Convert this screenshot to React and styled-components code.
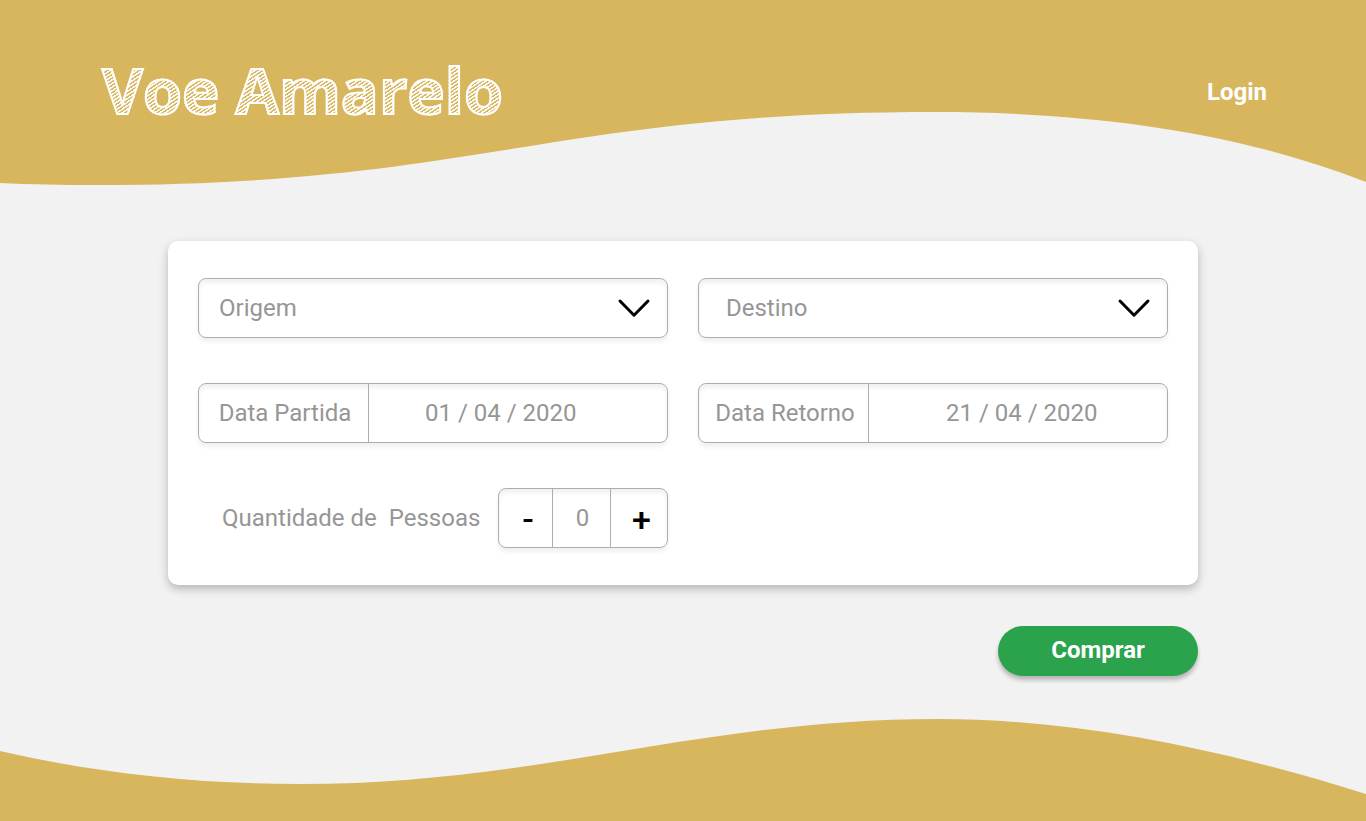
import React, { useState } from 'react';
import styled, { createGlobalStyle } from 'styled-components';

const gold = '#d8b65e';
const line = '#adadad';
const muted = '#969696';

const GlobalStyle = createGlobalStyle`
  *, *::before, *::after { box-sizing: border-box; }
  body { margin: 0; background: #f2f2f2; }
  body, button, input, select {
    font-family: Roboto, "Liberation Sans", sans-serif;
    font-size: 24px;
    line-height: 28px;
  }
`;

const Page = styled.div`
  display: flex;
  flex-direction: column;
  min-height: 100vh;
`;

const Header = styled.header`
  display: grid;
  grid-template-columns: minmax(0, 1fr);
  > * { grid-area: 1 / 1; }
`;

const Wave = styled.svg`
  display: block;
  width: 100%;
  height: ${(p) => p.$height}px;
  fill: ${gold};
`;

const Nav = styled.nav`
  display: flex;
  align-items: center;
  justify-content: space-between;
  align-self: start;
  height: 184px;
  padding: 0 99px 0 102px;
`;

const Brand = styled.h1`
  margin: 0;
  padding-bottom: 4px;
  font-family: "Open Sans", "Noto Sans", sans-serif;
  font-size: 63px;
  font-weight: 700;
  line-height: 88px;
  color: transparent;
  background: repeating-linear-gradient(146deg, #fff 0 1px, ${gold} 2px 3px);
  background-clip: text;
  -webkit-background-clip: text;
  -webkit-text-stroke: 2px #fff;
`;

const LoginLink = styled.a`
  color: #fff;
  font-weight: 700;
  text-decoration: none;
`;

const Form = styled.form`
  display: flex;
  flex-direction: column;
  align-items: flex-end;
  gap: 41px;
  width: calc(100% - 32px);
  max-width: 1030px;
  margin: 56px auto 43px;
`;

const Card = styled.div`
  display: grid;
  grid-template-columns: repeat(auto-fit, minmax(min(400px, 100%), 1fr));
  gap: 45px 30px;
  width: 100%;
  padding: 37px 30px;
  border-radius: 10px;
  background: #fff;
  box-shadow: 0 4px 10px rgba(0, 0, 0, 0.25);
`;

const Field = styled.div`
  display: grid;
  grid-template-columns: ${(p) => p.$columns || 'minmax(0, 1fr)'};
  height: 60px;
  overflow: hidden;
  border: 1px solid ${line};
  border-radius: 8px;
  color: ${muted};
  box-shadow: 0 4px 4px rgba(0, 0, 0, 0.06), inset 0 4px 4px rgba(0, 0, 0, 0.06);
`;

const Select = styled.select`
  grid-area: 1 / 1;
  width: 100%;
  padding: 0 60px 0 ${(p) => p.$indent}px;
  border: 0;
  appearance: none;
  background: transparent;
  color: inherit;
`;

const Chevron = styled.svg`
  grid-area: 1 / 1;
  align-self: center;
  justify-self: end;
  width: 34px;
  height: 20px;
  margin-right: 16px;
  fill: none;
  stroke: #000;
  stroke-width: 3;
  stroke-linecap: round;
  stroke-linejoin: round;
  pointer-events: none;
`;

const DateLabel = styled.label`
  display: flex;
  align-items: center;
  justify-content: center;
  padding-left: 3px;
  border-right: 1px solid ${line};
  white-space: nowrap;
`;

const DateInput = styled.input`
  min-width: 0;
  padding: 0 0 0 ${(p) => p.$indent}px;
  border: 0;
  background: transparent;
  color: inherit;
`;

const People = styled.div`
  display: flex;
  align-items: center;
  justify-content: space-between;
  padding-left: 24px;
  color: ${muted};
`;

const PeopleLabel = styled.label`
  white-space: pre;
`;

const Stepper = styled(Field)`
  width: 170px;
`;

const StepButton = styled.button`
  padding: 2px 0 0 5px;
  border: 0;
  background: transparent;
  color: #000;
  font-size: 34px;
  font-weight: 500;
  cursor: pointer;
`;

const Count = styled.input`
  min-width: 0;
  padding: 0 0 0 2px;
  border: solid ${line};
  border-width: 0 1px;
  background: transparent;
  color: inherit;
  text-align: center;
`;

const BuyButton = styled.button`
  width: 200px;
  height: 50px;
  padding: 0 0 2px;
  border: 0;
  border-radius: 25px;
  background: #2ba24c;
  color: #fff;
  font-weight: 700;
  box-shadow: 0 4px 4px rgba(0, 0, 0, 0.25);
  cursor: pointer;
`;

const Footer = styled.footer`
  margin-top: auto;
`;

function PlaceSelect({ label, indent }) {
  return (
    <Field>
      <Select aria-label={label} $indent={indent} defaultValue="">
        <option value="">{label}</option>
      </Select>
      <Chevron viewBox="0 0 34 20" aria-hidden="true">
        <path d="M3 3 17 17.2 31 3" />
      </Chevron>
    </Field>
  );
}

function DateField({ id, label, value, indent }) {
  return (
    <Field $columns="170px minmax(0, 1fr)">
      <DateLabel htmlFor={id}>{label}</DateLabel>
      <DateInput id={id} defaultValue={value} $indent={indent} />
    </Field>
  );
}

export default function App() {
  const [people, setPeople] = useState(0);
  return (
    <Page>
      <GlobalStyle />
      <Header>
        <Wave $height={185} viewBox="0 0 1366 185" preserveAspectRatio="none" aria-hidden="true">
          <path d="M0 0H1366V182C1240 132 1090 112 935 112C550 112 480 185 95 185Q45 185 0 183Z" />
        </Wave>
        <Nav>
          <Brand>Voe Amarelo</Brand>
          <LoginLink href="#login">Login</LoginLink>
        </Nav>
      </Header>
      <Form onSubmit={(e) => e.preventDefault()}>
        <Card>
          <PlaceSelect label="Origem" indent={20} />
          <PlaceSelect label="Destino" indent={27} />
          <DateField id="partida" label="Data Partida" value="01 / 04 / 2020" indent={56} />
          <DateField id="retorno" label="Data Retorno" value="21 / 04 / 2020" indent={77} />
          <People>
            <PeopleLabel htmlFor="pessoas">{'Quantidade de  Pessoas'}</PeopleLabel>
            <Stepper $columns="53px 59px minmax(0, 1fr)">
              <StepButton type="button" onClick={() => setPeople(Math.max(0, people - 1))}>-</StepButton>
              <Count id="pessoas" value={people} readOnly />
              <StepButton type="button" onClick={() => setPeople(people + 1)}>+</StepButton>
            </Stepper>
          </People>
        </Card>
        <BuyButton>Comprar</BuyButton>
      </Form>
      <Footer>
        <Wave $height={102} viewBox="0 0 1366 102" preserveAspectRatio="none" aria-hidden="true">
          <path d="M0 32C100 55 200 65 300 65C540 65 700 0 938 0C1080 0 1230 32 1366 75V102H0Z" />
        </Wave>
      </Footer>
    </Page>
  );
}
